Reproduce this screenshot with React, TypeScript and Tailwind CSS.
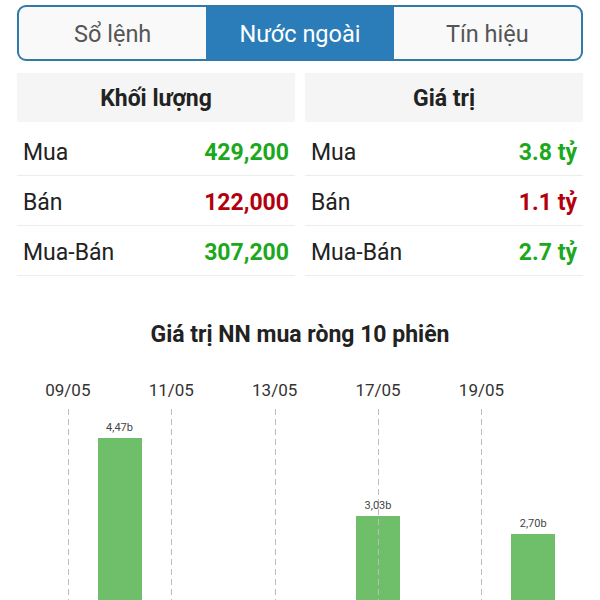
import React from "react";

const tabs = ["Sổ lệnh", "Nước ngoài", "Tín hiệu"];

type Row = { label: string; value: string; color: "green" | "red" };

const vol: Row[] = [
  { label: "Mua", value: "429,200", color: "green" },
  { label: "Bán", value: "122,000", color: "red" },
  { label: "Mua-Bán", value: "307,200", color: "green" },
];
const val: Row[] = [
  { label: "Mua", value: "3.8 tỷ", color: "green" },
  { label: "Bán", value: "1.1 tỷ", color: "red" },
  { label: "Mua-Bán", value: "2.7 tỷ", color: "green" },
];

const slots: { date?: string; value?: number; label?: string }[] = [
  { date: "09/05" },
  { value: 4.47, label: "4,47b" },
  { date: "11/05" },
  {},
  { date: "13/05" },
  {},
  { date: "17/05", value: 3.03, label: "3,03b" },
  {},
  { date: "19/05" },
  { value: 2.7, label: "2,70b" },
];

function Table({ title, rows }: { title: string; rows: Row[] }) {
  return (
    <div className="flex flex-col">
      <div className="h-[49px] pt-[3px] bg-[#f5f5f5] flex items-center justify-center text-[23px] font-bold text-[#222]">
        {title}
      </div>
      <div className="mt-[4px] flex flex-col">
        {rows.map((r) => (
          <div
            key={r.label}
            className="h-[50px] pt-[5px] flex items-center justify-between px-[6px] border-b border-[#ececec] text-[23px]"
          >
            <span className="text-[#222]">{r.label}</span>
            <span
              className={
                "font-bold " +
                (r.color === "green" ? "text-[#1ca81c]" : "text-[#b3000d]")
              }
            >
              {r.value}
            </span>
          </div>
        ))}
      </div>
    </div>
  );
}

export default function App() {
  const PX = 54.3;
  return (
    <div className="w-[600px] h-[600px] overflow-hidden bg-white font-['Roboto',sans-serif]">
      <div className="px-[17px] pt-[5px]">
        <div className="h-[56px] grid grid-cols-3 border-2 border-[#2f7aa8] rounded-[9px] overflow-hidden bg-[#f9f9f9]">
          {tabs.map((t, i) => (
            <div
              key={t}
              className={
                "flex items-center justify-center pt-[3px] text-[23.5px] " +
                (i === 1 ? "bg-[#2a7db9] text-white" : "text-[#555]")
              }
            >
              {t}
            </div>
          ))}
        </div>
        <div className="mt-[12px] grid grid-cols-2 gap-[10px]">
          <Table title="Khối lượng" rows={vol} />
          <Table title="Giá trị" rows={val} />
        </div>
      </div>
      <div className="mt-[44px] text-center text-[23px] font-bold text-[#222] leading-[30px]">
        Giá trị NN mua ròng 10 phiên
      </div>
      <div className="ml-[42px] w-[517px] mt-[29px] h-[302px] grid grid-cols-10">
        {slots.map((s, i) => (
          <div key={i} className="relative flex flex-col items-center">
            <div className="h-[22px] text-[17px] text-[#333] leading-[22px] whitespace-nowrap">
              {s.date ?? ""}
            </div>
            {s.date && (
              <div className="absolute left-1/2 top-[30px] bottom-0 w-px bg-[repeating-linear-gradient(to_bottom,#bdbdbd_0,#bdbdbd_6px,transparent_6px,transparent_10px)]" />
            )}
            <div className="flex-1 w-full flex flex-col items-center justify-end">
              {s.value !== undefined && (
                <>
                  <div className="text-[11px] text-[#444] leading-[12px] mb-[4px] relative z-10">
                    {s.label}
                  </div>
                  <div
                    className="w-[44px] bg-[#6fbe6a]"
                    style={{ height: `${Math.round(s.value * PX)}px` }}
                  />
                </>
              )}
            </div>
          </div>
        ))}
      </div>
    </div>
  );
}
